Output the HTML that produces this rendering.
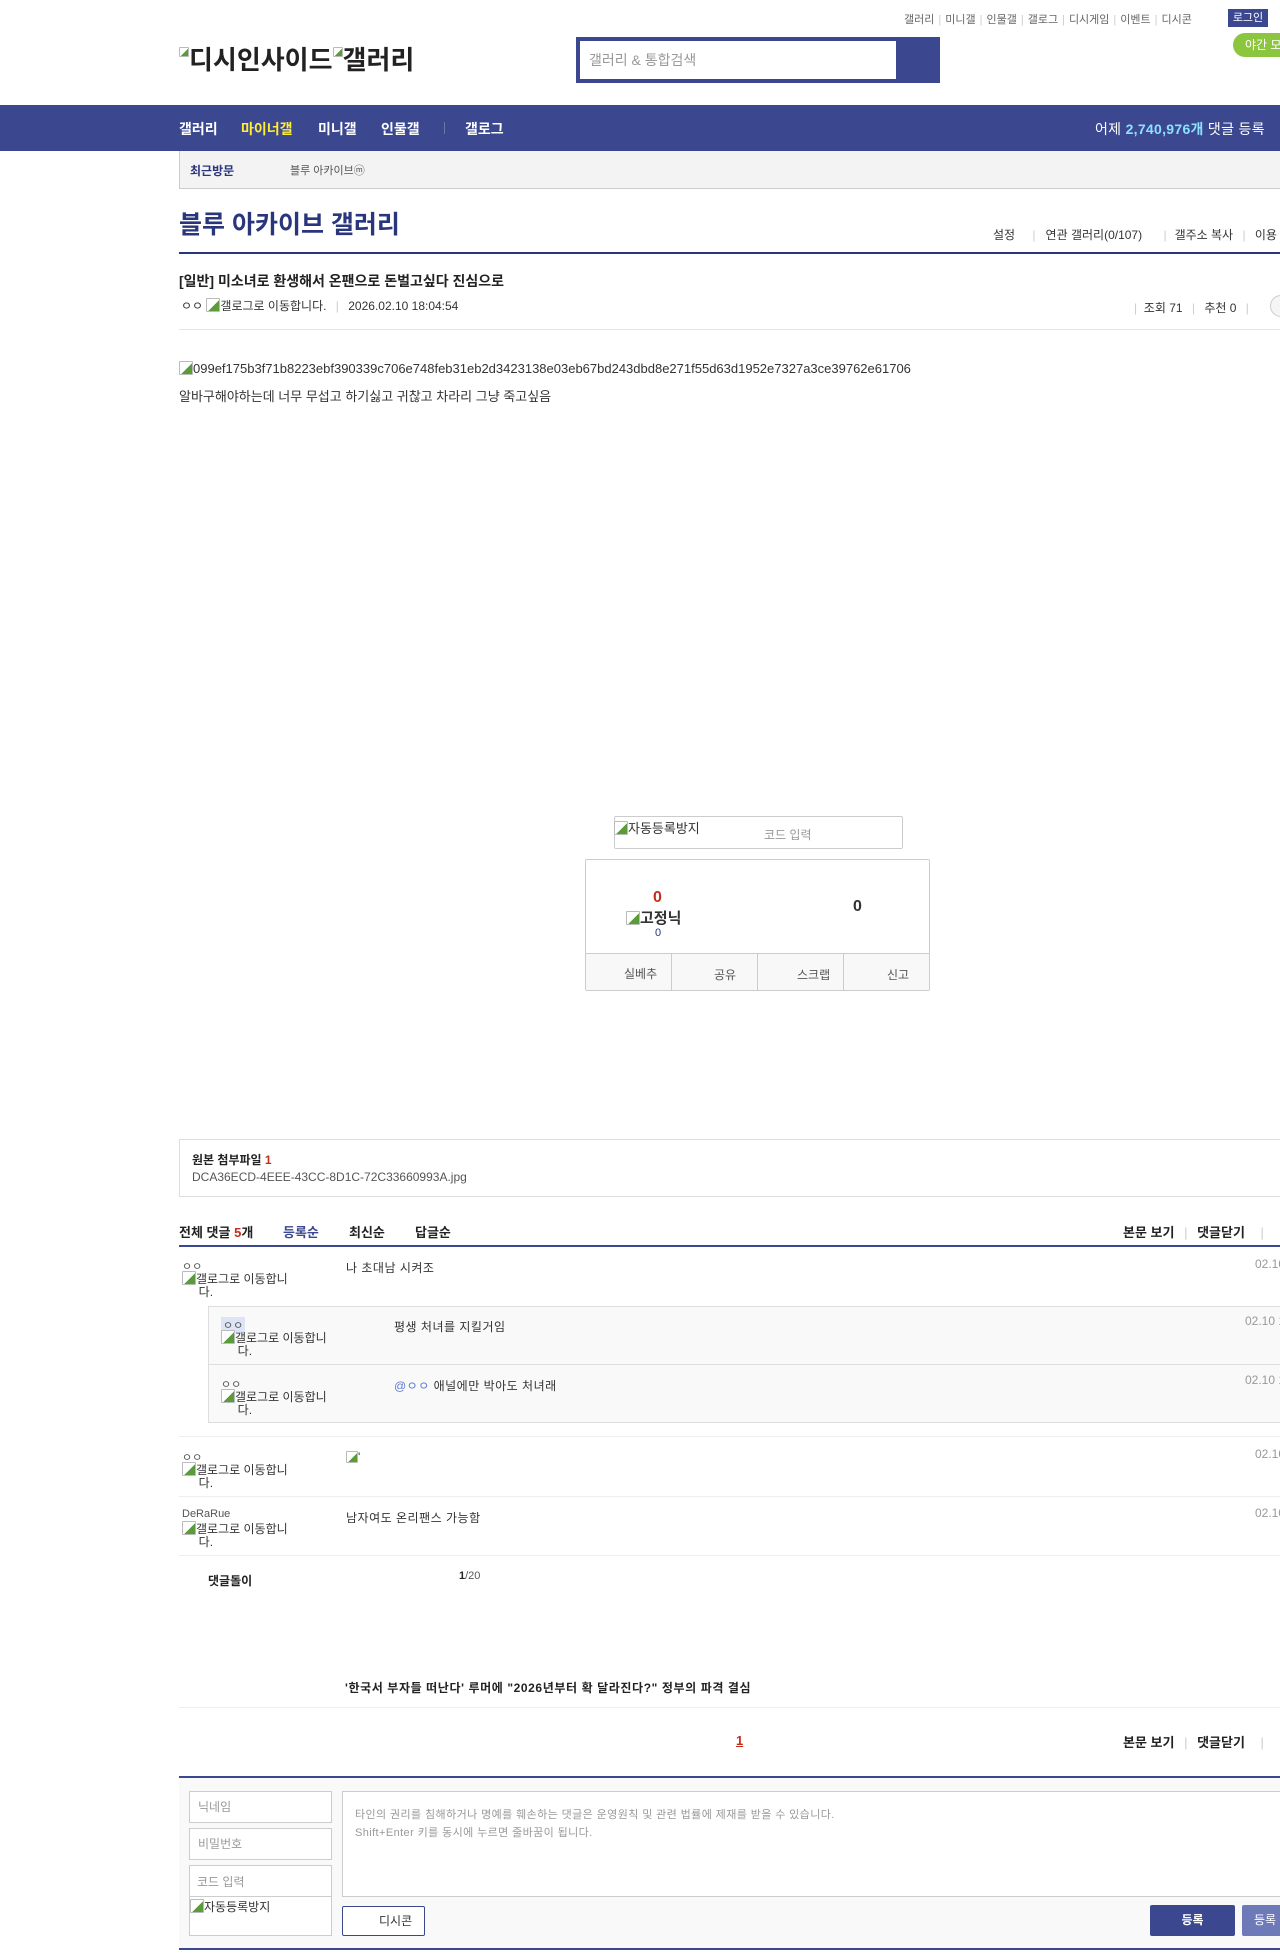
<!DOCTYPE html>
<html><head><meta charset="utf-8">
<style>
*{margin:0;padding:0;box-sizing:border-box}
body{width:1280px;height:1957px;overflow:hidden;position:relative;background:#fff;font-family:"Liberation Sans","Noto Sans CJK KR",sans-serif;color:#333;font-size:12px}
.a{position:absolute;white-space:nowrap}
.nav{color:#fff;font-weight:bold;font-size:14px}
.gray{color:#777}
.ico{display:inline-block;width:14px;height:14px;border:1px solid #bbb;border-radius:1px;vertical-align:-2px;background:linear-gradient(135deg,#fff 55%,#5a9c3a 56%)}
.cm{font-size:12px;color:#333}
.dt{color:#999;font-size:12px}
.sp{color:#ccc;margin:0 4px}
</style></head><body>
<!-- top links -->
<div class="a gray" style="left:904px;top:11px;font-size:11px;color:#666">갤러리<span class="sp">|</span>미니갤<span class="sp">|</span>인물갤<span class="sp">|</span>갤로그<span class="sp">|</span>디시게임<span class="sp">|</span>이벤트<span class="sp">|</span>디시콘</div>
<div class="a" style="left:1228px;top:9px;width:40px;height:18px;background:#3b4890;color:#fff;font-size:11px;line-height:18px;text-align:center">로그인</div>
<div class="a" style="left:1233px;top:33px;width:70px;height:24px;background:#8cc63e;border-radius:12px;color:#fff;font-size:12px;line-height:24px;padding-left:12px">야간 모드</div>
<!-- logo -->
<div class="a" style="left:179px;top:40px;font-size:26px;font-weight:bold;color:#222"><span class="ico" style="width:10px;height:10px;vertical-align:12px"></span>디시인사이드<span class="ico" style="width:10px;height:10px;vertical-align:12px"></span>갤러리</div>
<!-- search -->
<div class="a" style="left:576px;top:37px;width:364px;height:46px;background:#3b4890"></div>
<div class="a" style="left:580px;top:41px;width:316px;height:38px;background:#fff;color:#999;font-size:14px;line-height:38px;padding-left:9px">갤러리 &amp; 통합검색</div>
<!-- nav -->
<div class="a" style="left:0;top:105px;width:1280px;height:46px;background:#3b4890"></div>
<div class="a nav" style="left:179px;top:119px">갤러리</div>
<div class="a nav" style="left:241px;top:119px;color:#ffee33">마이너갤</div>
<div class="a nav" style="left:318px;top:119px">미니갤</div>
<div class="a nav" style="left:381px;top:119px">인물갤</div>
<div class="a" style="left:444px;top:122px;width:1px;height:12px;background:#6a75ab"></div>
<div class="a nav" style="left:465px;top:119px">갤로그</div>
<div class="a" style="left:1095px;top:119px;color:#fff;font-size:14px;letter-spacing:0.3px">어제 <b style="color:#8ee0ff">2,740,976개</b> 댓글 등록</div>
<!-- subbar -->
<div class="a" style="left:179px;top:151px;width:1110px;height:38px;background:#f3f3f3;border-left:1px solid #ccc;border-bottom:1px solid #ccc"></div>
<div class="a" style="left:190px;top:162px;font-weight:bold;color:#29367c;font-size:12px">최근방문</div>
<div class="a" style="left:290px;top:162px;color:#555;font-size:11px">블루 아카이브ⓜ</div>
<!-- title -->
<div class="a" style="left:179px;top:205px;font-size:25px;font-weight:bold;color:#29367c">블루 아카이브 갤러리</div>
<div class="a" style="left:993px;top:226px;font-size:12px;color:#333">설정 <span style="color:#ccc;margin:0 10px 0 14px">|</span>연관 갤러리(0/107) <span style="color:#ccc;margin:0 8px 0 18px">|</span>갤주소 복사 <span style="color:#ccc;margin:0 6px">|</span> 이용</div>
<div class="a" style="left:179px;top:252px;width:1110px;height:2px;background:#29367c"></div>
<!-- post -->
<div class="a" style="left:179px;top:271px;font-size:14px;font-weight:bold;color:#222">[일반] 미소녀로 환생해서 온팬으로 돈벌고싶다 진심으로</div>
<div class="a" style="left:181px;top:297px;font-size:12px;color:#333">ㅇㅇ <span class="ico"></span>갤로그로 이동합니다. <span style="color:#ccc;margin:0 6px">|</span> 2026.02.10 18:04:54</div>
<div class="a" style="left:1134px;top:299px;font-size:12px;color:#333"><span style="color:#ccc">|</span>&nbsp; 조회 71 <span style="color:#ccc;margin:0 6px">|</span> 추천 0 <span style="color:#ccc;margin:0 6px">|</span></div>
<div class="a" style="left:1270px;top:295px;width:24px;height:22px;border:1px solid #ccc;border-radius:11px;background:#f5f5f5"></div>
<div class="a" style="left:179px;top:329px;width:1110px;height:1px;background:#e5e5e5"></div>
<div class="a" style="left:179px;top:361px;font-size:13px;color:#333"><span class="ico"></span>099ef175b3f71b8223ebf390339c706e748feb31eb2d3423138e03eb67bd243dbd8e271f55d63d1952e7327a3ce39762e61706</div>
<div class="a" style="left:179px;top:386px;font-size:13px;color:#333">알바구해야하는데 너무 무섭고 하기싫고 귀찮고 차라리 그냥 죽고싶음</div>
<!-- captcha -->
<div class="a" style="left:614px;top:816px;width:289px;height:33px;border:1px solid #ccc;border-radius:2px"></div>
<div class="a" style="left:614px;top:818px;font-size:13px;color:#333"><span class="ico"></span>자동등록방지</div>
<div class="a" style="left:764px;top:826px;font-size:12px;color:#999">코드 입력</div>
<!-- rec box -->
<div class="a" style="left:585px;top:859px;width:345px;height:132px;border:1px solid #ccc;border-radius:2px"></div>
<div class="a" style="left:586px;top:953px;width:343px;height:37px;background:#f8f8f8;border-top:1px solid #ccc"></div>
<div class="a" style="left:671px;top:954px;width:1px;height:36px;background:#ccc"></div>
<div class="a" style="left:757px;top:954px;width:1px;height:36px;background:#ccc"></div>
<div class="a" style="left:843px;top:954px;width:1px;height:36px;background:#ccc"></div>
<div class="a" style="left:624px;top:965px;font-size:12px;color:#555">실베추</div>
<div class="a" style="left:714px;top:966px;font-size:12px;color:#555">공유</div>
<div class="a" style="left:797px;top:966px;font-size:12px;color:#555">스크랩</div>
<div class="a" style="left:887px;top:966px;font-size:12px;color:#555">신고</div>
<div class="a" style="left:653px;top:889px;font-size:16px;font-weight:bold;color:#c62e1b">0</div>
<div class="a" style="left:626px;top:907px;font-size:15px;font-weight:bold;color:#333"><span class="ico"></span>고정닉</div>
<div class="a" style="left:655px;top:927px;font-size:11px;color:#29367c">0</div>
<div class="a" style="left:853px;top:898px;font-size:16px;font-weight:bold;color:#333">0</div>
<!-- attachment -->
<div class="a" style="left:179px;top:1139px;width:1110px;height:58px;border:1px solid #ddd"></div>
<div class="a" style="left:192px;top:1151px;font-size:12px;font-weight:bold;color:#222">원본 첨부파일 <span style="color:#c62e1b">1</span></div>
<div class="a" style="left:192px;top:1170px;font-size:12px;color:#555">DCA36ECD-4EEE-43CC-8D1C-72C33660993A.jpg</div>
<!-- comment header -->
<div class="a" style="left:179px;top:1222px;font-size:13px;font-weight:bold;color:#222">전체 댓글 <span style="color:#c62e1b">5</span>개</div>
<div class="a" style="left:283px;top:1222px;font-size:13px;font-weight:bold;color:#3b4890">등록순</div>
<div class="a" style="left:349px;top:1222px;font-size:13px;font-weight:bold;color:#222">최신순</div>
<div class="a" style="left:415px;top:1222px;font-size:13px;font-weight:bold;color:#222">답글순</div>
<div class="a" style="left:1123px;top:1222px;font-size:13px;font-weight:bold;color:#222">본문 보기 <span style="color:#ccc;font-weight:normal;margin:0 6px">|</span> 댓글닫기 <span style="color:#ccc;font-weight:normal;margin-left:12px">|</span></div>
<div class="a" style="left:179px;top:1245px;width:1110px;height:2px;background:#3b4890"></div>
<!-- comments -->
<div class="a cm" style="left:182px;top:1258px;font-size:11px;color:#555">ㅇㅇ</div>
<div class="a cm" style="left:182px;top:1271px;line-height:13px"><span class="ico"></span>갤로그로 이동합니<br>&nbsp;&nbsp;&nbsp;&nbsp;&nbsp;다.</div>
<div class="a cm" style="left:346px;top:1259px;letter-spacing:0.5px">나 초대남 시켜조</div>
<div class="a dt" style="left:1255px;top:1257px">02.10</div>

<div class="a" style="left:208px;top:1306px;width:1080px;height:117px;background:#f9f9f9;border:1px solid #ddd"></div>
<div class="a" style="left:209px;top:1364px;width:1080px;height:1px;background:#ddd"></div>
<div class="a cm" style="left:221px;top:1317px;font-size:11px;color:#555;background:#dde4f5;padding:0 2px">ㅇㅇ</div>
<div class="a cm" style="left:221px;top:1330px;line-height:13px"><span class="ico"></span>갤로그로 이동합니<br>&nbsp;&nbsp;&nbsp;&nbsp;&nbsp;다.</div>
<div class="a cm" style="left:394px;top:1318px;letter-spacing:0.5px">평생 처녀를 지킬거임</div>
<div class="a dt" style="left:1245px;top:1314px">02.10 1</div>
<div class="a cm" style="left:221px;top:1376px;font-size:11px;color:#555">ㅇㅇ</div>
<div class="a cm" style="left:221px;top:1389px;line-height:13px"><span class="ico"></span>갤로그로 이동합니<br>&nbsp;&nbsp;&nbsp;&nbsp;&nbsp;다.</div>
<div class="a cm" style="left:394px;top:1377px;letter-spacing:0.5px"><span style="color:#5b7bd0">@ㅇㅇ</span> 애널에만 박아도 처녀래</div>
<div class="a dt" style="left:1245px;top:1373px">02.10 1</div>

<div class="a" style="left:179px;top:1436px;width:1110px;height:1px;background:#eee"></div>
<div class="a cm" style="left:182px;top:1449px;font-size:11px;color:#555">ㅇㅇ</div>
<div class="a cm" style="left:182px;top:1462px;line-height:13px"><span class="ico"></span>갤로그로 이동합니<br>&nbsp;&nbsp;&nbsp;&nbsp;&nbsp;다.</div>
<div class="a cm" style="left:346px;top:1450px"><span class="ico" style="width:12px;height:12px"></span>'</div>
<div class="a dt" style="left:1255px;top:1447px">02.10</div>
<div class="a" style="left:179px;top:1496px;width:1110px;height:1px;background:#eee"></div>
<div class="a cm" style="left:182px;top:1508px;font-size:11px;color:#555">DeRaRue</div>
<div class="a cm" style="left:182px;top:1521px;line-height:13px"><span class="ico"></span>갤로그로 이동합니<br>&nbsp;&nbsp;&nbsp;&nbsp;&nbsp;다.</div>
<div class="a cm" style="left:346px;top:1509px;letter-spacing:0.5px">남자여도 온리팬스 가능함</div>
<div class="a dt" style="left:1255px;top:1506px">02.10</div>
<div class="a" style="left:179px;top:1555px;width:1110px;height:1px;background:#eee"></div>
<div class="a" style="left:208px;top:1572px;font-size:12px;font-weight:bold;color:#222">댓글돌이</div>
<div class="a" style="left:459px;top:1570px;font-size:11px;color:#555"><b style="color:#222">1</b>/20</div>
<div class="a" style="left:345px;top:1679px;font-size:12px;font-weight:bold;color:#222;letter-spacing:0.6px">'한국서 부자들 떠난다' 루머에 "2026년부터 확 달라진다?" 정부의 파격 결심</div>
<div class="a" style="left:179px;top:1707px;width:1110px;height:1px;background:#eee"></div>
<div class="a" style="left:736px;top:1733px;font-size:13px;font-weight:bold;color:#c62e1b;text-decoration:underline">1</div>
<div class="a" style="left:1123px;top:1732px;font-size:13px;font-weight:bold;color:#222">본문 보기 <span style="color:#ccc;font-weight:normal;margin:0 6px">|</span> 댓글닫기 <span style="color:#ccc;font-weight:normal;margin-left:12px">|</span></div>
<!-- form -->
<div class="a" style="left:179px;top:1776px;width:1110px;height:2px;background:#3b4890"></div>
<div class="a" style="left:179px;top:1778px;width:1110px;height:170px;background:#f9f9f9"></div>
<div class="a" style="left:179px;top:1948px;width:1110px;height:2px;background:#3b4890"></div>
<div class="a" style="left:189px;top:1791px;width:143px;height:32px;background:#fff;border:1px solid #ccc;color:#999;font-size:12px;line-height:30px;padding-left:8px">닉네임</div>
<div class="a" style="left:189px;top:1828px;width:143px;height:32px;background:#fff;border:1px solid #ccc;color:#999;font-size:12px;line-height:30px;padding-left:8px">비밀번호</div>
<div class="a" style="left:189px;top:1865px;width:143px;height:71px;background:#fff;border:1px solid #ccc"></div>
<div class="a" style="left:189px;top:1896px;width:143px;height:1px;background:#ccc"></div>
<div class="a" style="left:197px;top:1873px;color:#999;font-size:12px">코드 입력</div>
<div class="a" style="left:190px;top:1898px;color:#333;font-size:12px"><span class="ico"></span>자동등록방지</div>
<div class="a" style="left:342px;top:1791px;width:950px;height:106px;background:#fff;border:1px solid #ccc"></div>
<div class="a" style="left:355px;top:1806px;color:#999;font-size:11px;line-height:18px;letter-spacing:0.4px">타인의 권리를 침해하거나 명예를 훼손하는 댓글은 운영원칙 및 관련 법률에 제재를 받을 수 있습니다.<br>Shift+Enter 키를 동시에 누르면 줄바꿈이 됩니다.</div>
<div class="a" style="left:342px;top:1906px;width:83px;height:30px;background:#fff;border:1px solid #3b4890;border-radius:2px;color:#333;font-size:12px;line-height:28px;padding-left:36px">디시콘</div>
<div class="a" style="left:1150px;top:1905px;width:85px;height:31px;background:#3b4890;border-radius:2px;color:#fff;font-size:12px;line-height:31px;text-align:center;font-weight:bold">등록</div>
<div class="a" style="left:1242px;top:1905px;width:60px;height:31px;background:#6e7ab8;border-radius:2px;color:#fff;font-size:12px;line-height:31px;padding-left:12px">등록</div>
</body></html>
